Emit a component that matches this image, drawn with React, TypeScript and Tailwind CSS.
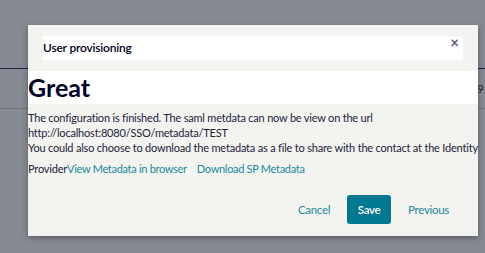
export default function App() {
  return (
    <div className="relative h-[253px] w-[485px] overflow-hidden bg-[#868a93] font-['Lato',sans-serif]">
      {/* page behind the modal */}
      <div className="mt-[68px] flex h-[40px] items-center justify-end border-t border-[#1c2440] pr-[1px] text-[12px] text-[#1c2440]">
        <span>9</span>
      </div>
      <div className="border-t border-[#6f737c]" />

      {/* modal */}
      <div className="absolute left-[28px] top-[25px] flex h-[211px] w-[450px] flex-col bg-[#f3f3f0] shadow-[0_2px_6px_rgba(0,0,0,0.35)]">
        <div className="mx-[15px] mt-[11px] flex h-[24px] items-center justify-between bg-white">
          <span className="text-[12px] font-semibold tracking-[-0.2px] text-[#000028]">User provisioning</span>
          <span className="mr-[4px] mt-[-12px] text-[15px] font-bold leading-none text-[#5e5e72]">×</span>
        </div>

        <div className="mt-[11px] flex h-[33px] items-center bg-white">
          <h1 className="text-[25px] font-bold leading-none text-[#000028]">Great</h1>
        </div>

        <div className="mt-[6px] text-[11px] leading-[15px] tracking-[-0.2px] text-[#23233c]">
          <p className="whitespace-nowrap">The configuration is finished. The saml metdata can now be view on the url</p>
          <p className="whitespace-nowrap">http://localhost:8080/SSO/metadata/TEST</p>
          <p className="whitespace-nowrap">You could also choose to download the metadata as a file to share with the contact at the Identity</p>
          <p className="mt-[6px] whitespace-nowrap">
            Provider
            <a className="tracking-[-0.3px] text-[#1a8aa0]">View Metadata in browser</a>
            <a className="ml-[10px] tracking-[-0.3px] text-[#1a8aa0]">Download SP Metadata</a>
          </p>
        </div>

        <div className="mt-[19px] flex items-center justify-end gap-[17px] pr-[29px] text-[11.5px] tracking-[-0.3px]">
          <button className="text-[#1a8aa0]">Cancel</button>
          <button className="h-[29px] w-[44px] rounded-[3px] bg-[#00788f] font-semibold text-white">Save</button>
          <button className="text-[#1a8aa0]">Previous</button>
        </div>
      </div>
    </div>
  );
}
